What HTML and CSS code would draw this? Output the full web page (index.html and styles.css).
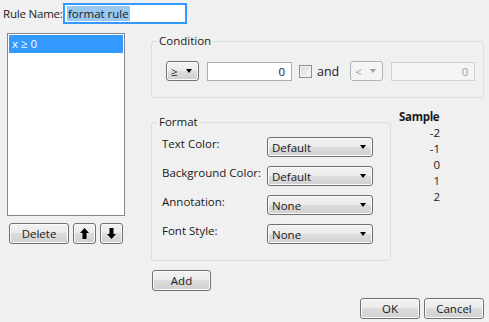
FILE: index.html
```html
<!DOCTYPE html>
<html>
<head>
    <title>Format Rule</title>
    <link rel="stylesheet" href="styles.css">
</head>
<body>
    <div class="name-row">
        <label class="name-label">Rule Name:</label>
        <div class="name-input"><span class="sel">format rule</span></div>
    </div>

    <div class="main">
        <div class="rules">
            <div class="rule-list">
                <div class="rule-item">x &ge; 0</div>
            </div>
            <div class="rule-buttons">
                <button class="btn btn-delete">Delete</button>
                <button class="btn btn-icon">
                    <svg width="9" height="11" viewBox="0 0 9 11"><path d="M4.5 0L9 5H6.5V11H2.5V5H0Z"/></svg>
                </button>
                <button class="btn btn-icon">
                    <svg width="9" height="11" viewBox="0 0 9 11"><path d="M4.5 11L9 6H6.5V0H2.5V6H0Z"/></svg>
                </button>
            </div>
        </div>

        <div class="editor">
            <fieldset class="group condition">
                <legend>Condition</legend>
                <div class="cond-row">
                    <div class="combo combo-op"><span>&ge;</span></div>
                    <div class="textbox">0</div>
                    <span class="check"></span>
                    <span class="and">and</span>
                    <div class="combo combo-op disabled"><span>&lt;</span></div>
                    <div class="textbox disabled">0</div>
                </div>
            </fieldset>

            <div class="format-row">
                <fieldset class="group format">
                    <legend>Format</legend>
                    <div class="format-grid">
                        <div class="field-label">Text Color:</div>
                        <div class="combo"><span>Default</span></div>
                        <div class="field-label">Background Color:</div>
                        <div class="combo"><span>Default</span></div>
                        <div class="field-label">Annotation:</div>
                        <div class="combo"><span>None</span></div>
                        <div class="field-label">Font Style:</div>
                        <div class="combo"><span>None</span></div>
                    </div>
                </fieldset>

                <div class="sample">
                    <div class="sample-title">Sample</div>
                    <div class="sample-values">
                        <div>-2</div>
                        <div>-1</div>
                        <div>0</div>
                        <div>1</div>
                        <div>2</div>
                    </div>
                </div>
            </div>

            <button class="btn btn-add">Add</button>
        </div>
    </div>

    <div class="footer">
        <button class="btn btn-ok">OK</button>
        <button class="btn btn-cancel">Cancel</button>
    </div>
</body>
</html>
```

FILE: styles.css
```css
body {
    margin: 0;
    width: 489px;
    height: 322px;
    overflow: hidden;
    background-color: #f0f0f0;
    font-family: "Open Sans", "Noto Sans", sans-serif;
    font-size: 11.5px;
    color: #1a1a1a;
}
.name-row {
    display: flex;
    align-items: center;
    padding: 3px 0 0 3px;
}
.name-label {
    flex: none;
    width: 60px;
    white-space: nowrap;
    letter-spacing: -0.2px;
}
.name-input {
    box-sizing: border-box;
    width: 124px;
    height: 21px;
    border: 2px solid #3399ff;
    background-color: #fff;
    display: flex;
    align-items: center;
    padding: 0 2px;
}
.sel {
    background-color: #99c9ef;
    padding: 0 1px;
    line-height: 15px;
}
.main {
    display: flex;
}
.rules {
    width: 118px;
    margin: 9px 0 0 7px;
}
.rule-list {
    box-sizing: border-box;
    height: 183px;
    border: 1px solid #828790;
    background-color: #fff;
    padding: 1px;
}
.rule-item {
    height: 18px;
    line-height: 18px;
    padding-left: 3px;
    background-color: #3399ff;
    color: #fff;
}
.rule-buttons {
    display: flex;
    gap: 4px;
    margin: 7px 0 0 2px;
}
.btn {
    font: inherit;
    color: #1a1a1a;
    height: 21px;
    padding: 0;
    border: 1px solid #707070;
    border-radius: 3px;
    background: linear-gradient(#f2f2f2, #ebebeb 50%, #dddddd 50%, #cfcfcf);
    box-shadow: inset 0 0 0 1px #fbfbfb;
}
.btn-delete {
    width: 60px;
}
.btn-icon {
    width: 23px;
    display: flex;
    align-items: center;
    justify-content: center;
}
.editor {
    width: 333px;
    margin: 10px 0 0 26px;
}
.group {
    box-sizing: border-box;
    min-width: 0;
    margin: 0;
    border: 1px solid #d5dfe5;
    border-radius: 3px;
}
.group legend {
    padding: 0 2px;
    line-height: 14px;
}
.condition {
    padding: 13px 5px 16px;
}
.cond-row {
    display: flex;
    align-items: center;
    height: 20px;
    margin-left: 9px;
}
.combo {
    box-sizing: border-box;
    height: 20px;
    display: flex;
    align-items: center;
    justify-content: space-between;
    padding: 0 6px 0 4px;
    border: 1px solid #707070;
    border-radius: 3px;
    background: linear-gradient(#f2f2f2, #ebebeb 50%, #dddddd 50%, #cfcfcf);
    box-shadow: inset 0 0 0 1px #fbfbfb;
}
.combo::after {
    content: "";
    border-top: 4px solid #000;
    border-left: 3px solid transparent;
    border-right: 3px solid transparent;
}
.combo-op {
    width: 33px;
}
.combo.disabled {
    border-color: #adb2b5;
    background: #f4f4f4;
    box-shadow: none;
    color: #a0a0a0;
}
.combo.disabled::after {
    border-top-color: #a0a0a0;
}
.textbox {
    box-sizing: border-box;
    width: 85px;
    height: 19px;
    margin-left: 8px;
    padding-right: 6px;
    border: 1px solid #abadb3;
    background-color: #fff;
    text-align: right;
    line-height: 17px;
}
.textbox.disabled {
    width: 84px;
    border-color: #d0d3d6;
    background-color: #f4f4f4;
    color: #a0a0a0;
}
.check {
    box-sizing: border-box;
    width: 13px;
    height: 13px;
    margin-left: 7px;
    border: 1px solid #8e8f8f;
    background: linear-gradient(135deg, #d8d8d8, #fbfbfb);
    box-shadow: inset 0 0 0 1px #f4f4f4;
}
.and {
    margin: 0 11px 0 5px;
    font-size: 12.5px;
}
.format-row {
    display: flex;
    align-items: flex-start;
    margin-top: 12px;
}
.format {
    width: 240px;
    margin-top: 5px;
    padding: 8px 5px 16px;
}
.format-grid {
    display: grid;
    grid-template-columns: 105px 106px;
    row-gap: 9px;
    margin-left: 5px;
}
.field-label {
    line-height: 14px;
    white-space: nowrap;
}
.sample {
    width: 41px;
    margin-left: 8px;
}
.sample-title {
    font-weight: bold;
    line-height: 14px;
    letter-spacing: -0.3px;
}
.sample-values {
    margin-top: 1px;
    text-align: right;
    line-height: 16px;
}
.btn-add {
    width: 59px;
    margin: 9px 0 0 1px;
}
.footer {
    display: flex;
    justify-content: flex-end;
    gap: 4px;
    padding: 7px 5px 0 0;
}
.btn-ok,
.btn-cancel {
    width: 60px;
}
```
